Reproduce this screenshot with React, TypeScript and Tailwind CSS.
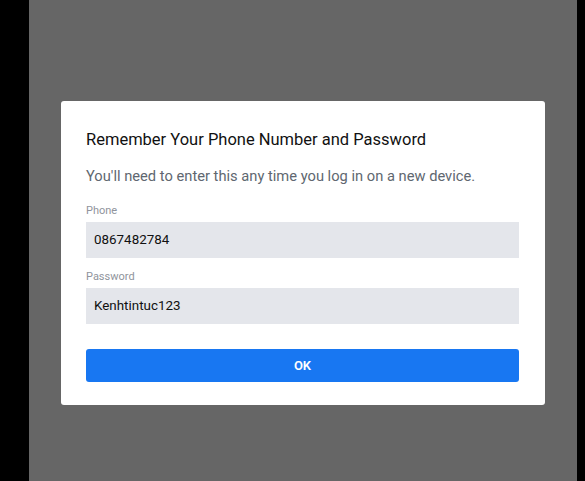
export default function App() {
  return (
    <div
      className="flex w-[585px] h-[481px] bg-black"
      style={{ fontFamily: "Roboto, 'Liberation Sans', sans-serif" }}
    >
      <div className="flex flex-col w-[548px] ml-[29px] bg-[#666666] pt-[101px]">
        <div className="ml-[32px] w-[484px] h-[304px] rounded-[3px] bg-white pl-[25px] pr-[26px] pt-[28px]">
          <h1 className="text-[16.5px] leading-[22px] text-[#111111]">
            Remember Your Phone Number and Password
          </h1>
          <p className="mt-[15px] text-[14.7px] leading-[20px] text-[#606770]">
            You'll need to enter this any time you log in on a new device.
          </p>

          <div className="mt-[18px] flex flex-col">
            <label className="text-[11px] leading-[14px] text-[#90949c]">Phone</label>
            <div className="mt-[4px] flex items-center h-[36px] w-full bg-[#e4e6eb] px-[8px] text-[13.4px] text-[#111111]">
              0867482784
            </div>
          </div>

          <div className="mt-[12px] flex flex-col">
            <label className="text-[11px] leading-[14px] text-[#90949c]">Password</label>
            <div className="mt-[4px] flex items-center h-[36px] w-full bg-[#e4e6eb] px-[8px] text-[13.4px] text-[#111111]">
              Kenhtintuc123
            </div>
          </div>

          <button className="mt-[25px] flex items-center justify-center w-full h-[33px] rounded-[3px] bg-[#1877f2] text-[13px] font-semibold text-white">
            OK
          </button>
        </div>
      </div>
    </div>
  );
}
